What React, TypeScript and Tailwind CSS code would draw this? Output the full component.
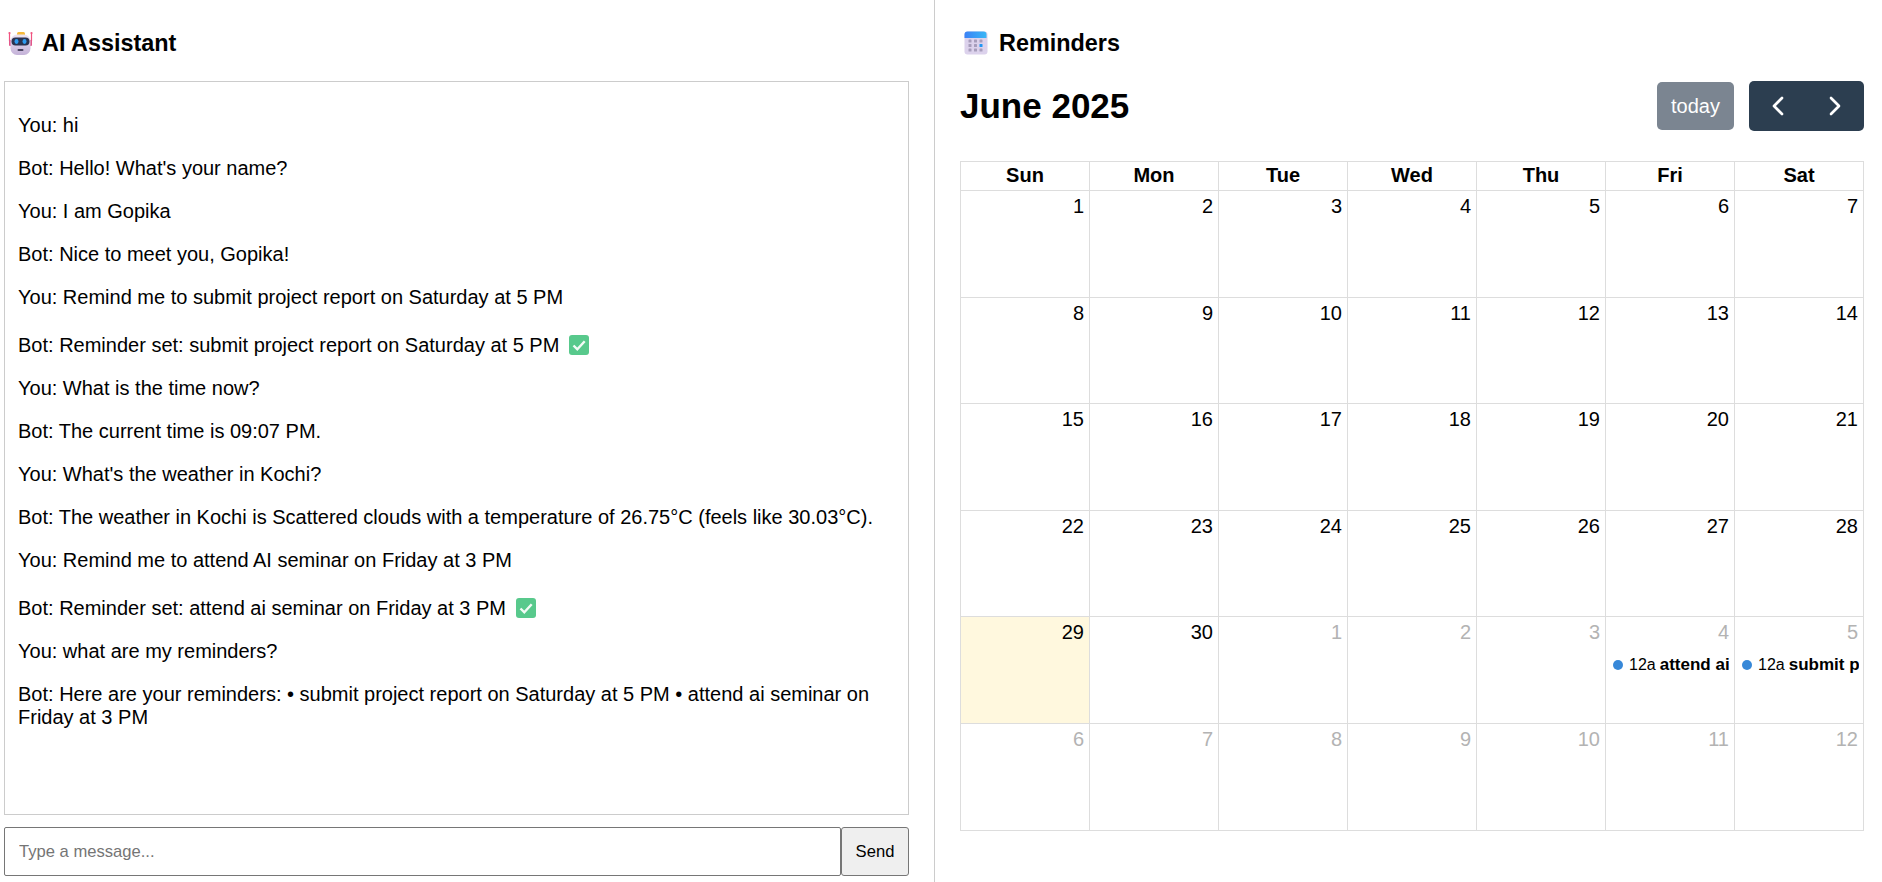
import { ChevronLeft, ChevronRight } from 'lucide-react'

type Day = { n: number; muted?: boolean; today?: boolean; event?: string }

const messages = [
  { text: 'You: hi' },
  { text: "Bot: Hello! What's your name?" },
  { text: 'You: I am Gopika' },
  { text: 'Bot: Nice to meet you, Gopika!' },
  { text: 'You: Remind me to submit project report on Saturday at 5 PM' },
  { text: 'Bot: Reminder set: submit project report on Saturday at 5 PM', check: true },
  { text: 'You: What is the time now?' },
  { text: 'Bot: The current time is 09:07 PM.' },
  { text: "You: What's the weather in Kochi?" },
  { text: 'Bot: The weather in Kochi is Scattered clouds with a temperature of 26.75°C (feels like 30.03°C).' },
  { text: 'You: Remind me to attend AI seminar on Friday at 3 PM' },
  { text: 'Bot: Reminder set: attend ai seminar on Friday at 3 PM', check: true },
  { text: 'You: what are my reminders?' },
  { text: 'Bot: Here are your reminders: • submit project report on Saturday at 5 PM • attend ai seminar on Friday at 3 PM' },
]

const weekdays = ['Sun', 'Mon', 'Tue', 'Wed', 'Thu', 'Fri', 'Sat']

const days: Day[] = [
  ...Array.from({ length: 28 }, (_, i) => ({ n: i + 1 })),
  { n: 29, today: true },
  { n: 30 },
  { n: 1, muted: true },
  { n: 2, muted: true },
  { n: 3, muted: true },
  { n: 4, muted: true, event: 'attend ai seminar' },
  { n: 5, muted: true, event: 'submit project report' },
  ...[6, 7, 8, 9, 10, 11, 12].map((n) => ({ n, muted: true })),
]

function RobotIcon() {
  return (
    <svg viewBox="0 0 26 24" className="h-6 w-[26px]" aria-hidden="true">
      <defs>
        <linearGradient id="robotHead" x1="0" y1="0" x2="0" y2="1">
          <stop offset="0" stopColor="#ece4f3" />
          <stop offset="1" stopColor="#c4b2d8" />
        </linearGradient>
      </defs>
      <rect x="9" y="1" width="8" height="4" rx="1.5" fill="#f6b93b" />
      <path d="M1.5 2v8M23.5 2v8" stroke="#f0527f" strokeWidth="1.2" />
      <circle cx="1.5" cy="2" r="1.1" fill="#f0527f" />
      <circle cx="23.5" cy="2" r="1.1" fill="#f0527f" />
      <rect x="1" y="9" width="3" height="6" rx="1" fill="#e2568a" />
      <rect x="21" y="9" width="3" height="6" rx="1" fill="#e2568a" />
      <rect x="2.5" y="3.5" width="20" height="20.5" rx="6.5" fill="url(#robotHead)" />
      <rect x="3.5" y="6.5" width="18" height="8" rx="4" fill="#2b3350" />
      <ellipse cx="8.5" cy="10.5" rx="2" ry="2.4" fill="#2f9bf0" />
      <ellipse cx="16.5" cy="10.5" rx="2" ry="2.4" fill="#2f9bf0" />
      <rect x="9.5" y="18" width="6" height="2" rx="1" fill="#4a4460" />
    </svg>
  )
}

function CalendarIcon() {
  return (
    <svg viewBox="0 0 24 24" className="h-6 w-6" aria-hidden="true">
      <defs>
        <linearGradient id="calTop" x1="0" y1="0" x2="1" y2="0">
          <stop offset="0" stopColor="#3b82f6" />
          <stop offset="1" stopColor="#38b6f5" />
        </linearGradient>
      </defs>
      <rect width="23" height="23" y="0.5" x="0.5" rx="3" fill="#dcd2ec" />
      <path d="M0.5 7V3.5a3 3 0 0 1 3-3h16a3 3 0 0 1 3 3V7z" fill="url(#calTop)" />
      <g fill="#a79dbb">
        <rect x="4.5" y="8.5" width="3" height="3" rx="0.6" />
        <rect x="10" y="8.5" width="3" height="3" rx="0.6" />
        <rect x="15.5" y="8.5" width="3" height="3" rx="0.6" />
        <rect x="4.5" y="13" width="3" height="3" rx="0.6" />
        <rect x="10" y="13" width="3" height="3" rx="0.6" />
        <rect x="4.5" y="17.5" width="3" height="3" rx="0.6" />
        <rect x="10" y="17.5" width="3" height="3" rx="0.6" />
        <rect x="15.5" y="17.5" width="3" height="3" rx="0.6" />
      </g>
      <rect x="15.5" y="13" width="3" height="3" rx="0.6" fill="#2196f3" />
    </svg>
  )
}

function CheckIcon() {
  return (
    <svg viewBox="0 0 20 20" className="ml-[10px] mt-[6px] inline-block h-5 w-5 align-[-3px]" aria-hidden="true">
      <rect width="20" height="20" rx="3" fill="#58c98c" />
      <path d="M4.5 10.5l3.8 3.8 7.4-8" fill="none" stroke="#f3fbf6" strokeWidth="2.4" />
    </svg>
  )
}

export default function App() {
  return (
    <div className="flex h-[882px] bg-white font-['Liberation_Sans',Arial,sans-serif] text-[20px] leading-[23px] text-black">
      <div className="flex w-[935px] flex-col border-r border-[#ccc] pl-1 pr-[25px]">
        <div className="flex h-[81px] items-center gap-2 pl-1 pt-[4px]">
          <RobotIcon />
          <h2 className="text-[23.4px] font-bold leading-7">AI Assistant</h2>
        </div>

        <div className="h-[734px] border border-[#ccc] px-[13px] pt-[32px]">
          {messages.map((m) => (
            <p key={m.text} className="mb-[20px]">
              {m.text}
              {m.check && <CheckIcon />}
            </p>
          ))}
        </div>

        <div className="mt-[12px] flex h-[49px]">
          <input
            placeholder="Type a message..."
            className="min-w-0 flex-1 rounded-[2px] border border-[#767676] bg-white px-[14px] text-[16.6px] placeholder:text-[#757575]"
          />
          <button className="w-[68px] rounded-[3px] border border-[#767676] bg-[#efefef] text-[16.6px]">Send</button>
        </div>
      </div>

      <div className="flex flex-1 flex-col pl-[25px] pr-[18px]">
        <div className="flex h-[81px] items-center gap-2 pl-1 pt-[4px]">
          <CalendarIcon />
          <h2 className="ml-[3px] text-[23.4px] font-bold leading-7">Reminders</h2>
        </div>

        <div className="flex h-[50px] items-center justify-between">
          <h1 className="text-[35px] font-bold leading-10">June 2025</h1>
          <div className="flex items-center gap-[15px]">
            <button className="h-[48px] w-[77px] rounded-[5px] bg-[#7b8591] text-[20px] text-white">today</button>
            <div className="flex h-[50px] w-[115px] rounded-[5px] bg-[#2c3e50] text-white">
              <button className="flex flex-1 items-center justify-center" aria-label="prev">
                <ChevronLeft size={32} strokeWidth={2} />
              </button>
              <button className="flex flex-1 items-center justify-center" aria-label="next">
                <ChevronRight size={32} strokeWidth={2} />
              </button>
            </div>
          </div>
        </div>

        <div className="mt-[30px] grid grid-cols-7 border-l border-t border-[#ddd]">
          {weekdays.map((d) => (
            <div key={d} className="flex h-[29px] items-center justify-center border-b border-r border-[#ddd] pb-[1px] font-bold">
              {d}
            </div>
          ))}
          {days.map((d, i) => (
            <div
              key={i}
              className={`h-[106.6px] min-w-0 overflow-hidden border-b border-r border-[#ddd] ${d.today ? 'bg-[#fff8de]' : ''}`}
            >
              <div className={`px-[5px] pt-[4px] text-right ${d.muted ? 'text-[#b3b3b3]' : ''}`}>{d.n}</div>
              {d.event && (
                <div className="mr-1 mt-[12px] flex items-center overflow-hidden whitespace-nowrap pl-[7px] text-[16px] leading-[18px]">
                  <span className="mr-[6px] h-[10px] w-[10px] shrink-0 rounded-full bg-[#3788d8]" />
                  <span className="mr-[4px]">12a</span>
                  <b className="text-[17px]">{d.event}</b>
                </div>
              )}
            </div>
          ))}
        </div>
      </div>
    </div>
  )
}
